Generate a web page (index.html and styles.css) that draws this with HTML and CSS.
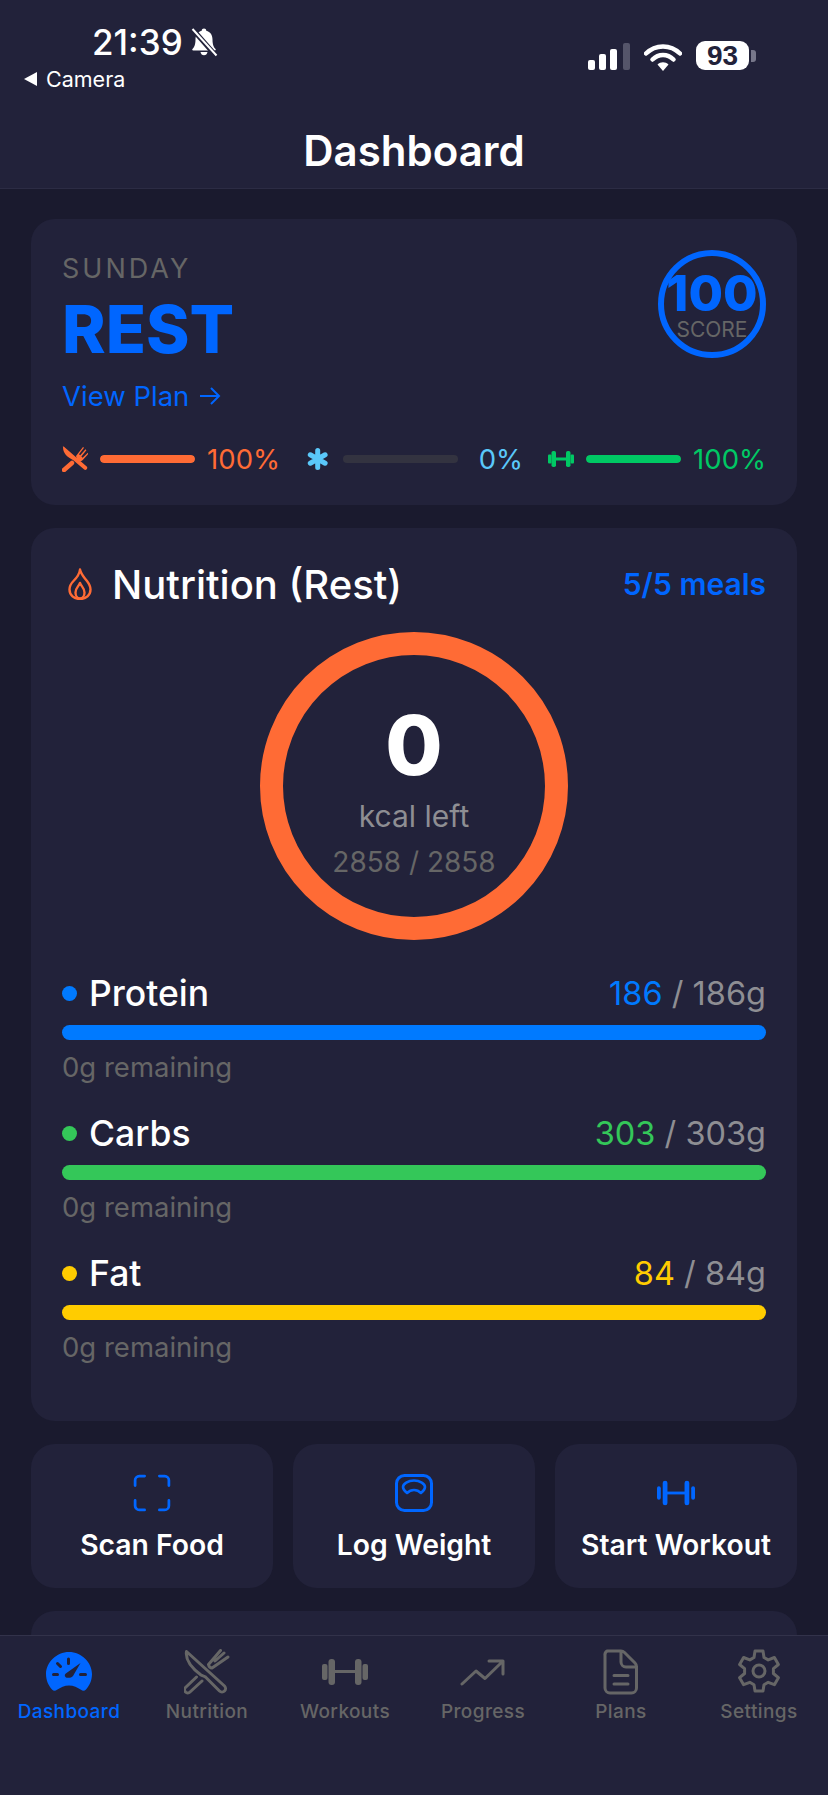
FILE: index.html
```html
<!DOCTYPE html>
<html lang="en">
<head>
<meta charset="utf-8">
<title>Dashboard</title>
<link rel="stylesheet" href="styles.css">
</head>
<body>
<div class="app">
  <header class="top">
    <div class="status">
      <div class="status-left">
        <div class="time-row">
          <span class="time">21:39</span>
          <svg class="bell" viewBox="0 0 30 30"><path d="M15 1.500c1.300 0 2.200.9 2.300 2.200 4 1 6.200 4.300 6.200 8.800 0 5 1.200 7.500 3 9.500.6.700.2 1.500-.7 1.500H4.200c-.9 0-1.300-.8-.7-1.500 1.800-2 3-4.500 3-9.500 0-4.500 2.200-7.800 6.200-8.800.1-1.300 1-2.200 2.300-2.200zM11.500 25h7c-.3 2-1.700 3.300-3.500 3.300s-3.200-1.300-3.500-3.300z" fill="#fff"/><path d="M3 1.500 27 29" stroke="#22223a" stroke-width="5"/><path d="M3.500 2 27.500 28.500" stroke="#fff" stroke-width="2"/></svg>
        </div>
        <div class="back-row">
          <svg class="back-arrow" viewBox="0 0 13 14"><path d="M13 0v14L0 7z" fill="#fff"/></svg>
          <span class="back-label">Camera</span>
        </div>
      </div>
      <div class="status-right">
        <svg class="signal" viewBox="0 0 42 27"><rect x="0" y="17" width="7" height="10" rx="2" fill="#fff"/><rect x="11" y="11" width="7" height="16" rx="2" fill="#fff"/><rect x="22" y="6" width="7" height="21" rx="2" fill="#fff"/><rect x="35" y="0" width="7" height="27" rx="2" fill="#55556a"/></svg>
        <svg class="wifi" viewBox="0 0 38 28"><path d="M2 10.500C11.500 1 26.500 1 36 10.500" fill="none" stroke="#fff" stroke-width="4.500" stroke-linecap="round"/><path d="M8.500 16.500c6-6 15-6 21 0" fill="none" stroke="#fff" stroke-width="4.500" stroke-linecap="round"/><path d="M13.500 21.500c3-3 8-3 11 0L19 28z" fill="#fff"/></svg>
        <div class="battery"><span class="battery-body">93</span><span class="battery-cap"></span></div>
      </div>
    </div>
    <h1 class="title">Dashboard</h1>
  </header>

  <main class="scroll">
    <section class="card plan">
      <div class="plan-top">
        <div class="plan-text">
          <div class="day">SUNDAY</div>
          <div class="rest">REST</div>
          <div class="view-plan">View Plan
            <svg class="arrow" viewBox="0 0 22 20"><path d="M1 10h19M12 2l8 8-8 8" fill="none" stroke="#0066ff" stroke-width="2"/></svg>
          </div>
        </div>
        <div class="score">
          <span class="score-num">100</span>
          <span class="score-label">SCORE</span>
        </div>
      </div>
      <div class="stats">
        <div class="stat">
          <svg class="stat-icon" viewBox="0 0 26 26"><path d="M1 1C.5.3 1.300.2 2 .7L24.700 20.500c1.700 1.500-.7 4.500-2.500 3L11 14C5 11 1 7 1 1z" fill="#ff6b35"/><path d="M2 24l8-7" stroke="#ff6b35" stroke-width="4.500" stroke-linecap="round"/><path d="M14 10 21 1l1 .8-5 6.500 1.200 1 5.300-6 .9.9-5 6.300 1.200 1.200 5.200-5 .8.8-5.800 6.500c-1.500 1.500-4 1.500-5.500.5z" fill="#ff6b35"/></svg>
          <span class="bar"><i class="fill orange"></i></span>
          <span class="pct orange-t">100%</span>
        </div>
        <div class="stat">
          <svg class="stat-icon" viewBox="0 0 26 26"><path d="M12.700 4.500v17M5.300 8.750l14.800 8.500M20.100 8.750 5.300 17.250" fill="none" stroke="#5ac8fa" stroke-width="5" stroke-linecap="round"/></svg>
          <span class="bar"></span>
          <span class="pct cyan-t">0%</span>
        </div>
        <div class="stat">
          <svg class="stat-icon" viewBox="0 0 26 26"><path d="M5 13h16" stroke="#00c864" stroke-width="3"/><rect x="0" y="8.500" width="3.500" height="9" rx="1" fill="#00c864"/><rect x="22.500" y="8.500" width="3.500" height="9" rx="1" fill="#00c864"/><rect x="3.500" y="5" width="4.500" height="16" rx="1.800" fill="#00c864"/><rect x="18" y="5" width="4.500" height="16" rx="1.800" fill="#00c864"/></svg>
          <span class="bar"><i class="fill green"></i></span>
          <span class="pct green-t">100%</span>
        </div>
      </div>
    </section>

    <section class="card nutrition">
      <div class="nut-head">
        <svg class="flame" viewBox="0 0 24 32"><path d="M12 1.500c1 5 4 7.500 7 11.500 2 2.700 3.500 5 3.500 8.500C22.500 27 18 31 12 31S1.500 27 1.500 21.500c0-4 2-6.500 4-8.500C8.500 10 11.500 7 12 1.500z" fill="none" stroke="#ff6b35" stroke-width="2.400" stroke-linejoin="round"/><path d="M12 15c1 3 4.500 5 4.500 9.500 0 3.500-2 6-4.500 6s-4.500-2.500-4.500-6C7.500 20 11 18 12 15z" fill="none" stroke="#ff6b35" stroke-width="2.400" stroke-linejoin="round"/></svg>
        <h2 class="nut-title">Nutrition (Rest)</h2>
        <span class="meals">5/5 meals</span>
      </div>
      <div class="ring">
        <span class="ring-num">0</span>
        <span class="ring-label">kcal left</span>
        <span class="ring-sub">2858 / 2858</span>
      </div>
      <div class="macros">
        <div class="macro">
          <div class="macro-row"><i class="dot protein"></i><span class="macro-name">Protein</span><span class="macro-val"><span class="protein-t">186</span><span class="macro-of"> / 186g</span></span></div>
          <div class="macro-bar protein"></div>
          <div class="macro-rem">0g remaining</div>
        </div>
        <div class="macro">
          <div class="macro-row"><i class="dot carbs"></i><span class="macro-name">Carbs</span><span class="macro-val"><span class="carbs-t">303</span><span class="macro-of"> / 303g</span></span></div>
          <div class="macro-bar carbs"></div>
          <div class="macro-rem">0g remaining</div>
        </div>
        <div class="macro">
          <div class="macro-row"><i class="dot fat"></i><span class="macro-name">Fat</span><span class="macro-val"><span class="fat-t">84</span><span class="macro-of"> / 84g</span></span></div>
          <div class="macro-bar fat"></div>
          <div class="macro-rem">0g remaining</div>
        </div>
      </div>
    </section>

    <section class="actions">
      <div class="action">
        <svg class="action-icon" viewBox="0 0 36 36"><path d="M2 11V6a4 4 0 0 1 4-4h5M25 2h5a4 4 0 0 1 4 4v5M34 25v5a4 4 0 0 1-4 4h-5M11 34H6a4 4 0 0 1-4-4v-5" fill="none" stroke="#0066ff" stroke-width="2.600" stroke-linecap="round"/></svg>
        <span class="action-label">Scan Food</span>
      </div>
      <div class="action">
        <svg class="action-icon" viewBox="0 0 38 38"><rect x="1.500" y="1.500" width="35" height="35" rx="8" fill="none" stroke="#0066ff" stroke-width="3"/><path d="M8 13c0-3 5-6.500 11-6.500S30 10 30 13c0 2-2 4.500-4 6-2-2-4.500-3-7-3s-5 1-7 3c-2-1.500-4-4-4-6z" fill="none" stroke="#0066ff" stroke-width="2.600" stroke-linejoin="round"/></svg>
        <span class="action-label">Log Weight</span>
      </div>
      <div class="action">
        <svg class="action-icon" viewBox="0 0 40 26"><path d="M8 13h24" stroke="#0066ff" stroke-width="3"/><rect x="0" y="6" width="4" height="14" rx="2" fill="#0066ff"/><rect x="36" y="6" width="4" height="14" rx="2" fill="#0066ff"/><rect x="6" y="0" width="5" height="26" rx="2.500" fill="#0066ff"/><rect x="29" y="0" width="5" height="26" rx="2.500" fill="#0066ff"/></svg>
        <span class="action-label">Start Workout</span>
      </div>
    </section>

    <section class="card peek"></section>
  </main>

  <nav class="tabs">
    <div class="tab active">
      <svg class="tab-icon" viewBox="0 0 46 46"><path d="M23 3C10.500 3 0 13.500 0 25c0 6.500 2.500 11.500 6 15.500 1.500 1.700 3.500 1.500 5 .3C14.500 38.500 18.500 36.500 23 36.500s8.500 2 12 4.300c1.500 1.200 3.500 1.400 5-.3 3.500-4 6-9 6-15.500C46 13.500 35.500 3 23 3z" fill="#0066ff"/><path d="M22.500 10v4.500M11.500 14.500l3 3M7.500 25.600h4M34.500 25.600h5" stroke="#22223a" stroke-width="3" stroke-linecap="round"/><path d="M34.500 14 27 27c-1.500 2-6 2.500-7.500 1s-.5-3 1-4z" fill="#22223a"/></svg>
      <span class="tab-label">Dashboard</span>
    </div>
    <div class="tab">
      <svg class="tab-icon" viewBox="0 0 46 46"><path d="M2.500 2.500 40.500 37a3.500 3.500 0 0 1-5 5L21.500 28c-1.500-1.300-3-1-4.500-2C9 20 1 12 2.500 2.500z" fill="none" stroke="#666" stroke-width="3" stroke-linejoin="round"/><path d="M12.500 28 1.500 38.500a3 3 0 0 0 4.500 4.500L18 32M24.500 15.500 36.500 1.500M28 19 44 8M31 12 40 4M24.500 15.500C25 18 26 19 28 19" fill="none" stroke="#666" stroke-width="3" stroke-linecap="round" stroke-linejoin="round"/></svg>
      <span class="tab-label">Nutrition</span>
    </div>
    <div class="tab">
      <svg class="tab-icon" viewBox="0 0 46 46"><path d="M10 22.500h26" stroke="#666" stroke-width="3"/><rect x="0" y="15" width="5.500" height="16" rx="2" fill="#666"/><rect x="40.500" y="15" width="5.500" height="16" rx="2" fill="#666"/><rect x="6.500" y="10" width="6.500" height="26" rx="3" fill="#666"/><rect x="33" y="10" width="6.500" height="26" rx="3" fill="#666"/></svg>
      <span class="tab-label">Workouts</span>
    </div>
    <div class="tab">
      <svg class="tab-icon" viewBox="0 0 46 46"><path d="M2 35l14-13 9 7.500L42 13M29 12h14v13" fill="none" stroke="#666" stroke-width="3" stroke-linecap="round" stroke-linejoin="round"/></svg>
      <span class="tab-label">Progress</span>
    </div>
    <div class="tab">
      <svg class="tab-icon" viewBox="0 0 46 46"><path d="M9 2h14c1.500 0 2.500.5 3.500 1.500L37 14c1 1 1.500 2 1.500 3.500V39a5 5 0 0 1-5 5H12a5 5 0 0 1-5-5V7a5 5 0 0 1 2-5z M23 2.500V13a5 5 0 0 0 5 5h10" fill="none" stroke="#666" stroke-width="3" stroke-linejoin="round"/><path d="M16 26.500h14M16 35h14" stroke="#666" stroke-width="3" stroke-linecap="round"/></svg>
      <span class="tab-label">Plans</span>
    </div>
    <div class="tab">
      <svg class="tab-icon" viewBox="0 0 46 46"><path d="M19 2h8l1 6.500 4.200 2.400 6.200-2.400 4 7-5 4.200v4.800l5 4.200-4 7-6.200-2.400-4.200 2.400L27 42h-8l-1-6.300-4.200-2.400-6.200 2.400-4-7 5-4.200v-4.800l-5-4.200 4-7 6.200 2.400L18 8.500z" fill="none" stroke="#666" stroke-width="3" stroke-linejoin="round"/><circle cx="23" cy="22" r="6" fill="none" stroke="#666" stroke-width="3"/></svg>
      <span class="tab-label">Settings</span>
    </div>
  </nav>
</div>
</body>
</html>
```
FILE: styles.css
```css
* { box-sizing: border-box; }
html, body { margin: 0; padding: 0; background: #1a1a2e; }
body { font-family: Inter, "Noto Sans", sans-serif; color: #fff; }
.app { width: 828px; height: 1795px; display: flex; flex-direction: column; overflow: hidden; }

.top { height: 189px; background: #22223a; border-bottom: 1px solid #2c2c44; flex: none; }
.status { height: 127px; display: flex; justify-content: space-between; padding: 25px 0 0 24px; }
.status-left { display: flex; flex-direction: column; }
.time-row { display: flex; align-items: center; gap: 6px; padding-left: 68px; height: 34px; }
.time { font-size: 35px; font-weight: 500; }
.bell { width: 30px; height: 30px; }
.back-row { display: flex; align-items: center; gap: 9px; margin-top: 7px; height: 26px; }
.back-arrow { width: 13px; height: 14px; }
.back-label { font-size: 21.500px; }
.status-right { display: flex; align-items: flex-start; padding: 18px 72px 0 0; gap: 14px; }
.signal { width: 42px; height: 27px; }
.wifi { width: 38px; height: 28px; }
.battery { display: flex; align-items: center; margin-top: -2px; }
.battery-body { width: 53px; height: 29px; border-radius: 9px; background: #fff; color: #22223a; font: 700 28px/29px "Liberation Sans", sans-serif; text-align: center; }
.battery-cap { width: 5px; height: 12px; margin-left: 2px; background: #77778a; border-radius: 0 3px 3px 0; }
.title { margin: 0; text-align: center; font-size: 42px; line-height: 48px; font-weight: 600; }

.scroll { flex: 1; min-height: 0; overflow: hidden; padding: 30px 31px 0; display: flex; flex-direction: column; gap: 23px; }
.card { background: #22223a; border-radius: 24px; flex: none; }

.plan { height: 286px; padding: 33px 31px 0; }
.plan-top { display: flex; justify-content: space-between; height: 183px; }
.day { font-size: 27px; line-height: 33px; letter-spacing: 3px; color: #666; }
.rest { font-size: 66px; line-height: 72px; font-weight: 800; color: #0066ff; margin-top: 8px; }
.view-plan { display: flex; align-items: center; gap: 10px; font-size: 27.500px; line-height: 36px; color: #0066ff; margin-top: 13px; }
.arrow { width: 22px; height: 20px; }
.score { width: 108px; height: 108px; border: 6px solid #0066ff; border-radius: 50%; display: flex; flex-direction: column; align-items: center; margin-top: -2px; }
.score-num { font-size: 50px; line-height: 50px; font-weight: 800; color: #0066ff; margin-top: 12px; }
.score-label { font-size: 21px; line-height: 24px; color: #666; }
.stats { display: flex; gap: 25px; margin-top: 9px; }
.stat { flex: 1; display: flex; align-items: center; gap: 12px; height: 30px; }
.stat-icon { width: 26px; height: 26px; flex: none; }
.bar { flex: 1; height: 8px; border-radius: 4px; background: #333340; overflow: hidden; display: block; }
.fill { display: block; width: 100%; height: 100%; border-radius: 4px; }
.orange { background: #ff6b35; }
.green { background: #00c864; }
.pct { font-size: 27.500px; min-width: 53px; text-align: right; }
.orange-t { color: #ff6b35; }
.cyan-t { color: #5ac8fa; }
.green-t { color: #00c864; }

.nutrition { height: 893px; padding: 31px 31px 0; }
.nut-head { display: flex; align-items: center; height: 50px; }
.flame { width: 24px; height: 32px; margin-left: 6px; }
.nut-title { margin: 0 0 0 20px; font-size: 40px; font-weight: 500; flex: 1; }
.meals { font-size: 30px; font-weight: 600; color: #0066ff; }
.ring { width: 308px; height: 308px; margin: 23px auto 0; border: 23px solid #ff6b35; border-radius: 50%; display: flex; flex-direction: column; align-items: center; }
.ring-num { font-size: 83px; line-height: 90px; font-weight: 800; margin-top: 45px; }
.ring-label { font-size: 30px; line-height: 38px; color: #8e8e93; margin-top: 7px; }
.ring-sub { font-size: 28px; line-height: 34px; color: #666; margin-top: 10px; }
.macros { margin-top: 31px; display: flex; flex-direction: column; gap: 15px; }
.macro { height: 125px; }
.macro-row { display: flex; align-items: center; height: 44px; }
.dot { width: 15px; height: 15px; border-radius: 50%; margin-right: 12px; }
.macro-name { flex: 1; font-size: 35.500px; font-weight: 500; }
.macro-val { font-size: 32.500px; }
.macro-of { color: #8e8e93; }
.macro-bar { height: 15px; border-radius: 8px; margin-top: 10px; }
.macro-rem { font-size: 27.500px; line-height: 34px; color: #666; margin-top: 10px; }
.protein { background: #007aff; }
.carbs { background: #34c759; }
.fat { background: #ffcc00; }
.protein-t { color: #007aff; }
.carbs-t { color: #34c759; }
.fat-t { color: #ffcc00; }

.actions { display: grid; grid-template-columns: repeat(3, 1fr); gap: 20px; flex: none; }
.action { height: 144px; background: #22223a; border-radius: 24px; display: flex; flex-direction: column; align-items: center; padding-top: 30px; }
.action-icon { width: 38px; height: 38px; }
.action-label { font-size: 28.300px; line-height: 34px; font-weight: 600; margin-top: 16px; white-space: nowrap; }
.peek { height: 120px; }

.tabs { height: 160px; flex: none; background: #22223a; border-top: 1px solid #32324a; display: grid; grid-template-columns: repeat(6, 1fr); padding-top: 13px; }
.tab { display: flex; flex-direction: column; align-items: center; color: #666; }
.tab.active { color: #0066ff; }
.tab-icon { width: 46px; height: 46px; }
.tab-label { font-size: 19px; line-height: 26px; letter-spacing: .4px; font-weight: 500; margin-top: 4px; }
```
